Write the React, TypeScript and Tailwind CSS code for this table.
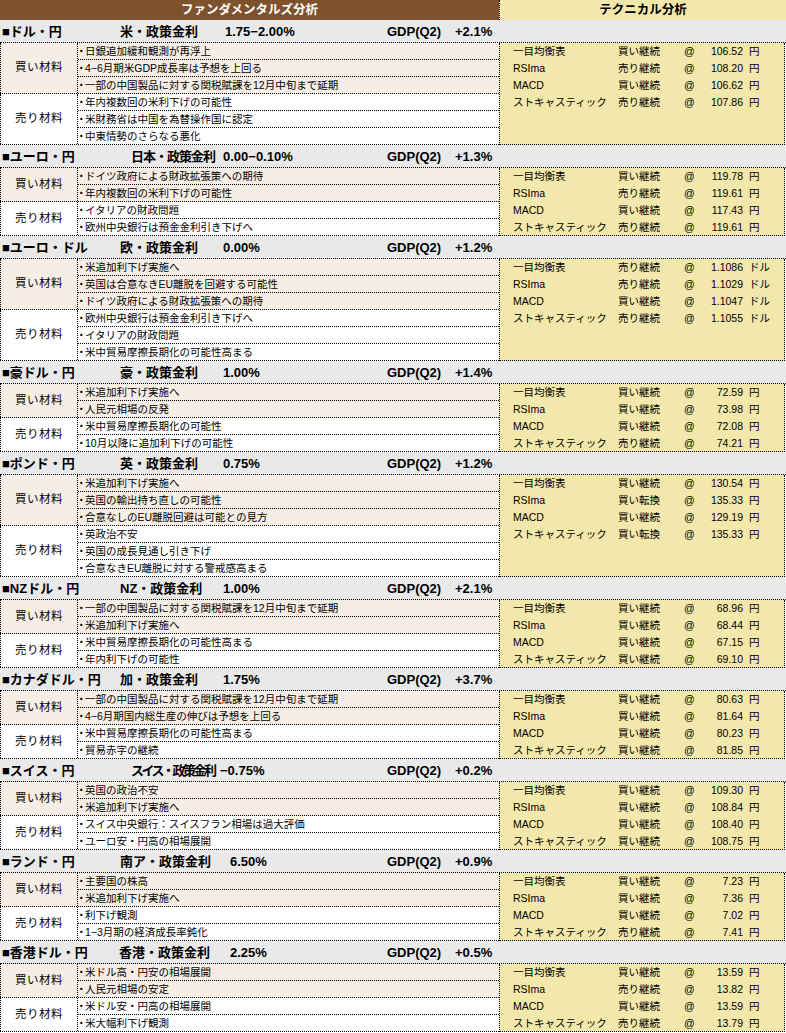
import React from 'react';

type Tech = [string, string];

type Section = {
  pair: string;
  nameW: string;
  label: string;
  labelW: string;
  rate: string;
  rateW: string;
  gdp: string;
  unit: string;
  buy: string[];
  sell: string[];
  tech: Tech[];
};

const INDICATORS = ['一目均衡表', 'RSIma', 'MACD', 'ストキャスティック'];

const sections: Section[] = [
  {
    pair: '■ドル・円', nameW: 'w-[120px]', label: '米・政策金利', labelW: 'w-[105px]', rate: '1.75−2.00%', rateW: 'w-[162px]', gdp: '+2.1%', unit: '円',
    buy: ['日銀追加緩和観測が再浮上', '4−6月期米GDP成長率は予想を上回る', '一部の中国製品に対する関税賦課を12月中旬まで延期'],
    sell: ['年内複数回の米利下げの可能性', '米財務省は中国を為替操作国に認定', '中東情勢のさらなる悪化'],
    tech: [['買い継続', '106.52'], ['売り継続', '108.20'], ['買い継続', '106.62'], ['売り継続', '107.86']],
  },
  {
    pair: '■ユーロ・円', nameW: 'w-[131px]', label: '日本・政策金利', labelW: 'w-[92px] tracking-[-1px]', rate: '0.00−0.10%', rateW: 'w-[164px]', gdp: '+1.3%', unit: '円',
    buy: ['ドイツ政府による財政拡張策への期待', '年内複数回の米利下げの可能性'],
    sell: ['イタリアの財政問題', '欧州中央銀行は預金金利引き下げへ'],
    tech: [['買い継続', '119.78'], ['売り継続', '119.61'], ['買い継続', '117.43'], ['売り継続', '119.61']],
  },
  {
    pair: '■ユーロ・ドル', nameW: 'w-[120px]', label: '欧・政策金利', labelW: 'w-[103px]', rate: '0.00%', rateW: 'w-[164px]', gdp: '+1.2%', unit: 'ドル',
    buy: ['米追加利下げ実施へ', '英国は合意なきEU離脱を回避する可能性', 'ドイツ政府による財政拡張策への期待'],
    sell: ['欧州中央銀行は預金金利引き下げへ', 'イタリアの財政問題', '米中貿易摩擦長期化の可能性高まる'],
    tech: [['売り継続', '1.1086'], ['売り継続', '1.1029'], ['買い継続', '1.1047'], ['売り継続', '1.1055']],
  },
  {
    pair: '■豪ドル・円', nameW: 'w-[120px]', label: '豪・政策金利', labelW: 'w-[103px]', rate: '1.00%', rateW: 'w-[164px]', gdp: '+1.4%', unit: '円',
    buy: ['米追加利下げ実施へ', '人民元相場の反発'],
    sell: ['米中貿易摩擦長期化の可能性', '10月以降に追加利下げの可能性'],
    tech: [['買い継続', '72.59'], ['買い継続', '73.98'], ['買い継続', '72.08'], ['売り継続', '74.21']],
  },
  {
    pair: '■ポンド・円', nameW: 'w-[120px]', label: '英・政策金利', labelW: 'w-[103px]', rate: '0.75%', rateW: 'w-[164px]', gdp: '+1.2%', unit: '円',
    buy: ['米追加利下げ実施へ', '英国の輸出持ち直しの可能性', '合意なしのEU離脱回避は可能との見方'],
    sell: ['英政治不安', '英国の成長見通し引き下げ', '合意なきEU離脱に対する警戒感高まる'],
    tech: [['買い継続', '130.54'], ['買い転換', '135.33'], ['買い継続', '129.19'], ['買い転換', '135.33']],
  },
  {
    pair: '■NZドル・円', nameW: 'w-[120px]', label: 'NZ・政策金利', labelW: 'w-[103px]', rate: '1.00%', rateW: 'w-[164px]', gdp: '+2.1%', unit: '円',
    buy: ['一部の中国製品に対する関税賦課を12月中旬まで延期', '米追加利下げ実施へ'],
    sell: ['米中貿易摩擦長期化の可能性高まる', '年内利下げの可能性'],
    tech: [['買い継続', '68.96'], ['買い継続', '68.44'], ['買い継続', '67.15'], ['買い継続', '69.10']],
  },
  {
    pair: '■カナダドル・円', nameW: 'w-[120px]', label: '加・政策金利', labelW: 'w-[103px]', rate: '1.75%', rateW: 'w-[164px]', gdp: '+3.7%', unit: '円',
    buy: ['一部の中国製品に対する関税賦課を12月中旬まで延期', '4−6月期国内総生産の伸びは予想を上回る'],
    sell: ['米中貿易摩擦長期化の可能性高まる', '貿易赤字の継続'],
    tech: [['買い継続', '80.63'], ['買い継続', '81.64'], ['買い継続', '80.23'], ['買い継続', '81.85']],
  },
  {
    pair: '■スイス・円', nameW: 'w-[131px]', label: 'スイス・政策金利', labelW: 'w-[89px] tracking-[-2.5px]', rate: '−0.75%', rateW: 'w-[167px]', gdp: '+0.2%', unit: '円',
    buy: ['英国の政治不安', '米追加利下げ実施へ'],
    sell: ['スイス中央銀行：スイスフラン相場は過大評価', 'ユーロ安・円高の相場展開'],
    tech: [['買い継続', '109.30'], ['買い継続', '108.84'], ['買い継続', '108.40'], ['買い継続', '108.75']],
  },
  {
    pair: '■ランド・円', nameW: 'w-[120px]', label: '南ア・政策金利', labelW: 'w-[110px]', rate: '6.50%', rateW: 'w-[157px]', gdp: '+0.9%', unit: '円',
    buy: ['主要国の株高', '米追加利下げ実施へ'],
    sell: ['利下げ観測', '1−3月期の経済成長率鈍化'],
    tech: [['買い継続', '7.23'], ['買い継続', '7.36'], ['買い継続', '7.02'], ['売り継続', '7.41']],
  },
  {
    pair: '■香港ドル・円', nameW: 'w-[119px]', label: '香港・政策金利', labelW: 'w-[111px]', rate: '2.25%', rateW: 'w-[157px]', gdp: '+0.5%', unit: '円',
    buy: ['米ドル高・円安の相場展開', '人民元相場の安定'],
    sell: ['米ドル安・円高の相場展開', '米大幅利下げ観測'],
    tech: [['買い継続', '13.59'], ['売り継続', '13.82'], ['買い継続', '13.59'], ['売り継続', '13.79']],
  },
];

const Group = ({ title, items, buy }: { title: string; items: string[]; buy: boolean }) => (
  <div className={`flex border-b border-dotted border-black ${buy ? 'bg-[#f6eee5]' : 'bg-white'}`}>
    <div className="w-[78px] shrink-0 border-l border-r border-dotted border-black flex items-center justify-center text-[11.5px] tracking-[0.5px]">
      {title}
    </div>
    <div className="flex-1 flex flex-col">
      {items.map((t, i) => (
        <div
          key={i}
          className={`flex items-center text-[10.5px] whitespace-nowrap ${i < items.length - 1 ? 'h-[17px] border-b border-dotted border-black' : 'h-[16px]'}`}
        >
          <span className="ml-[-2px] mr-[-1.5px]">・</span>
          {t}
        </div>
      ))}
    </div>
  </div>
);

const SectionBlock = ({ s }: { s: Section }) => (
  <div>
    <div className="h-[23px] bg-[#e9e9e9] border-b border-dotted border-black flex items-center font-bold text-[13px] whitespace-nowrap">
      <div className={`${s.nameW} shrink-0 pl-[2px]`}>{s.pair}</div>
      <div className={`${s.labelW} shrink-0`}>{s.label}</div>
      <div className={`${s.rateW} shrink-0`}>{s.rate}</div>
      <div className="w-[68px] shrink-0">GDP(Q2)</div>
      <div>{s.gdp}</div>
    </div>
    <div className="flex w-[785px]">
      <div className="w-[499px] shrink-0">
        <Group title="買い材料" items={s.buy} buy />
        <Group title="売り材料" items={s.sell} buy={false} />
      </div>
      <div className="flex-1 bg-[#f3e8ab] border-l border-r border-b border-dotted border-black pl-[13px] text-[10.5px]">
        {s.tech.map((t, i) => (
          <div key={i} className={`flex items-center whitespace-nowrap ${i < 3 ? 'h-[17px]' : 'h-[16px]'}`}>
            <div className="w-[105px] shrink-0">{INDICATORS[i]}</div>
            <div className="w-[66px] shrink-0">{t[0]}</div>
            <div className="w-[20px] shrink-0">@</div>
            <div className="w-[39px] shrink-0 text-right">{t[1]}</div>
            <div className="pl-[6px]">{s.unit}</div>
          </div>
        ))}
      </div>
    </div>
  </div>
);

export default function App() {
  return (
    <div className="w-[786px] bg-white text-black font-['Liberation_Sans','Noto_Sans_CJK_JP',sans-serif] leading-none">
      <div className="h-[20px] flex font-bold text-[12.5px]">
        <div className="w-[499px] shrink-0 bg-[#7d522d] text-white flex items-center justify-center">
          ファンダメンタルズ分析
        </div>
        <div className="flex-1 bg-[#f3e8ab] border-l border-dotted border-black flex items-center justify-center">
          テクニカル分析
        </div>
      </div>
      {sections.map((s, i) => (
        <SectionBlock key={i} s={s} />
      ))}
    </div>
  );
}
